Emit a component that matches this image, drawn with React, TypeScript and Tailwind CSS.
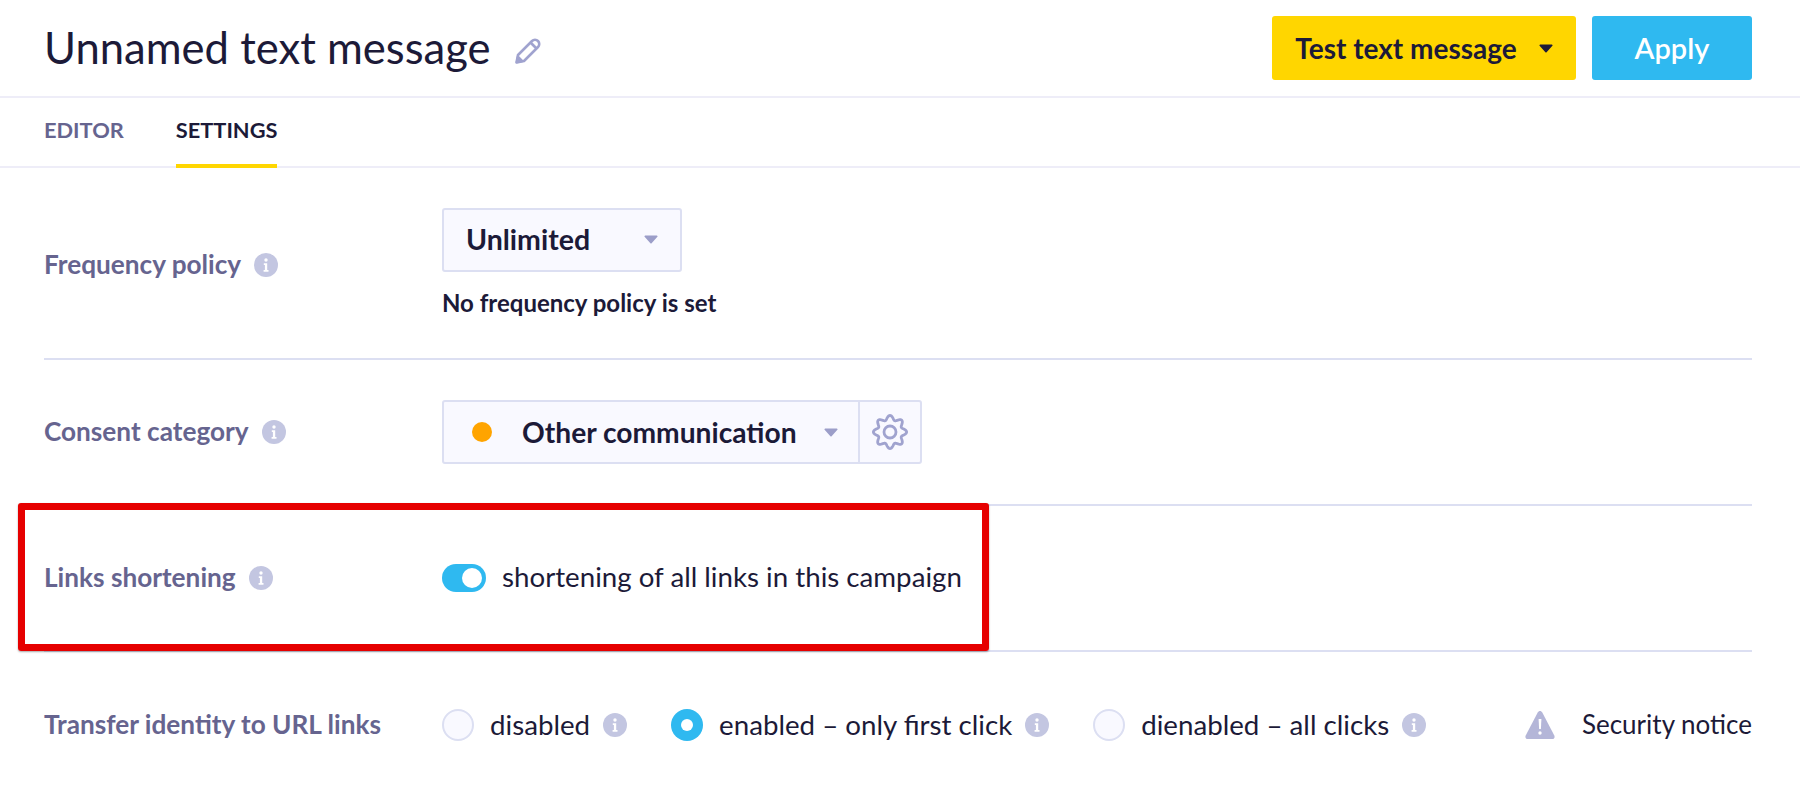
const Info = () => (
  <svg viewBox="0 0 24 24" className="block w-6 h-6 shrink-0">
    <circle cx="12" cy="12" r="12" fill="#c3c6e1" />
    <circle cx="12" cy="7" r="1.7" fill="#fff" />
    <path d="M9.800 10.200h3.400V17h1.300v1.700H9.600V17h1.300v-5.100H9.800z" fill="#fff" />
  </svg>
);

const Caret = ({ color = "#9c9ec9", w = 14, h = 9 }: { color?: string; w?: number; h?: number }) => (
  <svg width={w} height={h} viewBox="0 0 14 9" className="shrink-0">
    <path d="M1.200 0.500h11.600a.8.8 0 0 1 .6 1.300L7.600 8.200a.8.8 0 0 1-1.200 0L.6 1.800A.8.8 0 0 1 1.200.5z" fill={color} />
  </svg>
);

const gearPath = () => {
  const pts: string[] = [];
  for (let i = 0; i < 160; i++) {
    const a = (i / 160) * Math.PI * 2 + Math.PI / 8;
    const r = 14.4 + 2.2 * Math.cos(8 * a);
    pts.push(`${(18 + r * Math.cos(a)).toFixed(2)} ${(18 + r * Math.sin(a)).toFixed(2)}`);
  }
  return `M${pts.join("L")}Z`;
};

const Radio = ({ on }: { on?: boolean }) =>
  on ? (
    <span className="w-8 h-8 rounded-full bg-[#2fb9f0] flex items-center justify-center shrink-0">
      <span className="block w-3 h-3 rounded-full bg-white" />
    </span>
  ) : (
    <span className="block w-8 h-8 rounded-full bg-[#f9f9ff] border-2 border-[#dcdff2] shrink-0" />
  );

const Label = ({ children, info = true, offset = false }: { children: string; info?: boolean; offset?: boolean }) => (
  <div className={`w-[398px] shrink-0 flex items-center gap-[13px] text-[26.200px] font-bold text-[#66648f] ${offset ? "pt-[4px]" : ""}`}>
    <span>{children}</span>
    {info && <Info />}
  </div>
);

export default function App() {
  return (
    <div className="relative w-[1800px] h-[788px] overflow-hidden bg-white font-['Lato',sans-serif] text-[#1c1a38]">
      <header className="h-[98px] flex items-center justify-between pl-[44px] pr-[48px] border-b-2 border-[#eeedf8]">
        <div className="flex items-center gap-[23px]">
          <h1 className="text-[43.600px] leading-none font-normal">Unnamed text message</h1>
          <svg viewBox="0 0 28 28" className="w-[28px] h-[28px] mt-[6px]" fill="none" stroke="#a0a3cf" strokeWidth="2.600" strokeLinejoin="round">
            <path d="M2.500 25.500L4 18 18 4a4.100 4.100 0 0 1 6 6L10 24z" />
            <path d="M16.500 5.500l6 6" />
            <path d="M3 25l1-5 4 4z" fill="#a0a3cf" />
          </svg>
        </div>
        <div className="flex gap-4">
          <button className="w-[304px] h-16 bg-[#ffd600] rounded-[3px] flex items-center justify-center gap-[22px] text-[28px] font-bold">
            Test text message
            <Caret color="#1c1a38" />
          </button>
          <button className="w-40 h-16 bg-[#2fb9f0] rounded-[3px] text-white text-[29px] font-semibold">Apply</button>
        </div>
      </header>

      <nav className="h-[70px] flex gap-[52px] pl-[44px] border-b-2 border-[#eeedf8] text-[21.800px] font-bold">
        <a className="h-[70px] flex items-center text-[#66648f] pb-[6px]">EDITOR</a>
        <a className="h-[70px] flex items-center border-b-4 border-[#ffd600] pb-[2px]">SETTINGS</a>
      </nav>

      <main className="pl-[44px] pr-[48px]">
        <section className="h-[192px] flex items-center border-b-2 border-[#dcdff2]">
          <Label offset>Frequency policy</Label>
          <div className="flex flex-col gap-[16px]">
            <div className="w-[240px] h-16 rounded-[3px] border-2 border-[#dcdff2] bg-[#f9f9ff] flex items-center justify-between pl-[22px] pr-[22px] pb-[2px] text-[28.500px] font-bold">
              Unlimited
              <Caret />
            </div>
            <p className="text-[24px] font-bold leading-[30px]">No frequency policy is set</p>
          </div>
        </section>

        <section className="h-[146px] flex items-center border-b-2 border-[#dcdff2]">
          <Label>Consent category</Label>
          <div className="w-[480px] h-16 rounded-[3px] border-2 border-[#dcdff2] bg-[#f9f9ff] flex items-center">
            <div className="flex-1 h-full flex items-center border-r-2 border-[#dcdff2] pl-[28px] pr-[20px]">
              <span className="w-5 h-5 rounded-full bg-[#ffa400] shrink-0" />
              <span className="ml-[30px] flex-1 text-[28.200px] font-bold">Other communication</span>
              <Caret />
            </div>
            <div className="w-[60px] flex items-center justify-center">
              <svg viewBox="0 0 36 36" className="w-[36px] h-[36px]" fill="none" stroke="#a0a3cf" strokeWidth="2.800" strokeLinejoin="round">
                <path d={gearPath()} />
                <circle cx="18" cy="18" r="6" />
              </svg>
            </div>
          </div>
        </section>

        <section className="h-[146px] flex items-center border-b-2 border-[#dcdff2]">
          <Label>Links shortening</Label>
          <div className="flex items-center gap-4 text-[27.700px]">
            <span className="w-11 h-7 rounded-full bg-[#2fb9f0] flex items-center justify-end pr-1 shrink-0">
              <span className="w-5 h-5 rounded-full bg-white" />
            </span>
            <span className="pb-[2px]">shortening of all links in this campaign</span>
          </div>
        </section>

        <section className="h-[146px] flex items-center">
          <Label info={false}>Transfer identity to URL links</Label>
          <div className="flex-1 flex items-center text-[27.700px]">
            <Radio />
            <span className="ml-4">disabled</span>
            <div className="ml-[13px]"><Info /></div>
            <div className="ml-[44px]"><Radio on /></div>
            <span className="ml-4">enabled – only first click</span>
            <div className="ml-[13px]"><Info /></div>
            <div className="ml-[44px]"><Radio /></div>
            <span className="ml-4">dienabled – all clicks</span>
            <div className="ml-[13px]"><Info /></div>
            <div className="ml-auto flex items-center gap-[27px]">
              <svg viewBox="0 0 30 29" className="w-[30px] h-[29px]">
                <path d="M15 1c1 0 1.800.6 2.300 1.500l12 23c.8 1.600-.2 3.500-2 3.500H2.700c-1.800 0-2.800-1.900-2-3.500l12-23C13.200 1.600 14 1 15 1z" fill="#b4b6d8" />
                <path d="M13.600 9h2.800l-.5 10h-1.800z" fill="#fff" />
                <circle cx="15" cy="23" r="1.700" fill="#fff" />
              </svg>
              <span className="text-[26px]">Security notice</span>
            </div>
          </div>
        </section>
      </main>

      <div className="absolute left-[18px] top-[503px] w-[971px] h-[148px] border-[7px] border-[#e60000] rounded-[3px] shadow-[0_1px_2px_rgba(0,0,0,0.35)]" />
    </div>
  );
}
